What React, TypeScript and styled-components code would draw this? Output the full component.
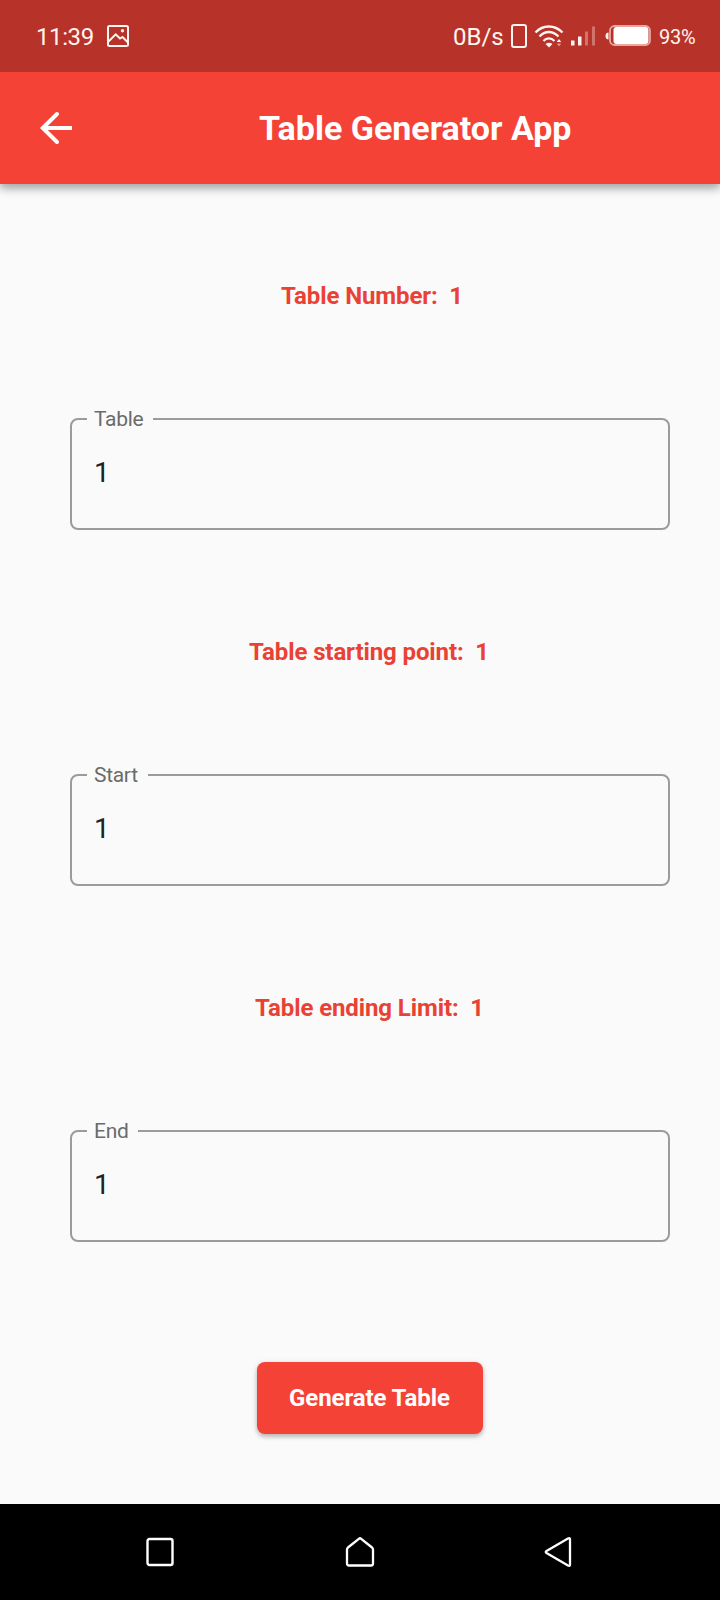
import React from 'react';
import styled, { createGlobalStyle } from 'styled-components';

const GlobalStyle = createGlobalStyle`
  * { box-sizing: border-box; }
  body { margin: 0; background: #fafafa; font-family: Roboto, "Liberation Sans", sans-serif; }
`;

const Screen = styled.div`
  width: 720px;
  height: 1600px;
  display: flex;
  flex-direction: column;
  background: #fafafa;
  overflow: hidden;
`;

const StatusBar = styled.header`
  position: relative;
  z-index: 1;
  height: 72px;
  flex: none;
  display: flex;
  align-items: center;
  padding: 0 24px 0 36px;
  background: #b73229;
  color: #fff4ef;
`;

const StatusText = styled.span<{ $size: number; $width: number; $gap?: number; $tracking?: number }>`
  width: ${(p) => p.$width}px;
  margin-left: ${(p) => p.$gap ?? 0}px;
  font-size: ${(p) => p.$size}px;
  letter-spacing: ${(p) => p.$tracking ?? 0}px;
  line-height: 28px;
  white-space: nowrap;
  padding-top: 1px;
`;

const StatusGroup = styled.div`
  display: flex;
  align-items: center;
`;

const RightGroup = styled(StatusGroup)`
  margin-left: auto;
`;

const Glyph = styled.svg<{ $gap?: number }>`
  display: block;
  flex: none;
  margin-left: ${(p) => p.$gap ?? 0}px;
`;

const AppBar = styled.div`
  height: 112px;
  flex: none;
  display: flex;
  align-items: center;
  padding-left: 32px;
  background: #f44336;
  color: #fff;
  box-shadow: 0 4px 10px rgba(0, 0, 0, 0.24), 0 4px 8px rgba(0, 0, 0, 0.16);
`;

const BackButton = styled.button`
  width: 48px;
  height: 48px;
  padding: 0;
  border: 0;
  background: none;
  color: inherit;
`;

const Title = styled.h1`
  margin: 0 0 0 179px;
  font-size: 34px;
  line-height: 40px;
  font-weight: 700;
  white-space: nowrap;
`;

const Form = styled.main`
  flex: 1;
  display: flex;
  flex-direction: column;
  padding: 98px 50px 0 70px;
`;

const Section = styled.section`
  height: 356px;
  flex: none;
  display: flex;
  flex-direction: column;
`;

const Heading = styled.h2<{ $inset: number }>`
  margin: 0 0 97px;
  padding-left: ${(p) => p.$inset}px;
  color: #e94235;
  font-size: 24px;
  letter-spacing: -0.1px;
  line-height: 28px;
  font-weight: 700;
  white-space: pre;
`;

const Field = styled.fieldset`
  height: 123px;
  margin: 0;
  padding: 0;
  border: 2px solid #9b9b9b;
  border-radius: 8px;
`;

const Label = styled.legend<{ $width: number }>`
  width: ${(p) => p.$width}px;
  margin-left: 15px;
  padding: 0 0 0 7px;
  color: #6b6b6b;
  font-size: 21px;
  letter-spacing: -0.3px;
  line-height: 24px;
`;

const Value = styled.div`
  padding: 25px 22px 0;
  color: #212121;
  font-size: 28px;
  line-height: 34px;
`;

const GenerateButton = styled.button`
  align-self: center;
  width: 226px;
  height: 72px;
  flex: none;
  margin-top: 12px;
  padding: 0 1px 0 0;
  border: 0;
  border-radius: 8px;
  background: #f44336;
  color: #fff;
  font-family: inherit;
  font-size: 24px;
  letter-spacing: -0.1px;
  font-weight: 700;
  box-shadow: 0 3px 4px rgba(0, 0, 0, 0.2), 0 1px 6px rgba(0, 0, 0, 0.12);
`;

const NavBar = styled.nav`
  height: 96px;
  flex: none;
  display: flex;
  align-items: center;
  justify-content: space-between;
  padding: 0 144px;
  background: #000;
`;

const sections = [
  { title: 'Table Number:  1', label: 'Table', value: '1', inset: 211, notch: 66 },
  { title: 'Table starting point:  1', label: 'Start', value: '1', inset: 179, notch: 61 },
  { title: 'Table ending Limit:  1', label: 'End', value: '1', inset: 185, notch: 51 },
];

const PictureIcon = () => (
  <Glyph $gap={12} width="24" height="24" viewBox="0 0 24 24" fill="none" stroke="#fff4ef" strokeWidth="2">
    <rect x="2" y="2" width="20" height="20" rx="1.5" />
    <path d="M2.5 17.5 9.7 10.3l4.3 4.2 2.5-1.5 5 5" />
    <circle cx="16.5" cy="6.8" r="1.7" fill="#fff4ef" stroke="none" />
  </Glyph>
);

const PhoneIcon = () => (
  <Glyph $gap={7} width="18" height="24" viewBox="0 0 18 24" fill="none" stroke="#fff4ef" strokeWidth="2">
    <rect x="2" y="1" width="14" height="22" rx="2" />
  </Glyph>
);

const WifiIcon = () => (
  <Glyph $gap={6} width="30" height="24" viewBox="0 0 30 24" fill="none" stroke="#fff4ef" strokeWidth="2.3">
    <path d="M1.5 8.5C9 .5 20.5 .5 28.5 8.5" />
    <path d="M5.5 12.5C11 6.5 18.5 6.5 24.5 12.5" />
    <path d="M9.5 17C12.5 13.5 17 13.5 20.5 17" />
    <path d="m11.5 20 3.5 3.5 3.5-3.5c-2-1.7-5-1.7-7 0Z" fill="#fff4ef" stroke="none" />
    <path d="m22.7 18 2.3-3 2.3 3Z" fill="#fff4ef" stroke="none" />
    <path d="m22.7 19.5 2.3 3 2.3-3Z" fill="#fff4ef" fillOpacity="0.5" stroke="none" />
  </Glyph>
);

const SignalIcon = () => (
  <Glyph $gap={7} width="25" height="20" viewBox="0 0 25 20" fill="#fff4ef">
    <rect x="0" y="14.5" width="3.5" height="5" />
    <rect x="7" y="10.5" width="3.5" height="9" />
    <rect x="14" y="5.5" width="3" height="14" opacity="0.35" />
    <rect x="21" y="0.5" width="3" height="19" opacity="0.35" />
  </Glyph>
);

const BatteryIcon = () => (
  <Glyph $gap={9} width="47" height="22" viewBox="0 0 47 22">
    <path d="M3.5 7.5v7C1.5 14.5.5 13 .5 11s1-3.500 3-3.500Z" fill="#fff4ef" />
    <rect x="5" y="1" width="40" height="19" rx="4.5" fill="none" stroke="#e9a59f" strokeWidth="1.8" />
    <rect x="8.500" y="2" width="35" height="17" rx="3" fill="#fff" />
  </Glyph>
);

export default function App() {
  return (
    <Screen>
      <GlobalStyle />
      <StatusBar>
        <StatusGroup>
          <StatusText $size={24} $width={58} $tracking={-0.4}>11:39</StatusText>
          <PictureIcon />
        </StatusGroup>
        <RightGroup>
          <StatusText $size={24} $width={50}>0B/s</StatusText>
          <PhoneIcon />
          <WifiIcon />
          <SignalIcon />
          <BatteryIcon />
          <StatusText $size={20} $width={37} $gap={7} $tracking={-0.3}>93%</StatusText>
        </RightGroup>
      </StatusBar>
      <AppBar>
        <BackButton aria-label="Back">
          <Glyph width="48" height="48" viewBox="0 0 24 24" fill="none" stroke="#fff" strokeWidth="2">
            <path d="M12.500 5 5.400 12l7.100 7" strokeLinecap="round" />
            <path d="M6 12H20" />
          </Glyph>
        </BackButton>
        <Title>Table Generator App</Title>
      </AppBar>
      <Form>
        {sections.map((s) => (
          <Section key={s.label}>
            <Heading $inset={s.inset}>{s.title}</Heading>
            <Field>
              <Label $width={s.notch}>{s.label}</Label>
              <Value>{s.value}</Value>
            </Field>
          </Section>
        ))}
        <GenerateButton>Generate Table</GenerateButton>
      </Form>
      <NavBar>
        <Glyph width="32" height="32" viewBox="0 0 32 32" fill="none" stroke="#fff" strokeWidth="2.4">
          <rect x="3.5" y="3" width="25" height="26" rx="2" />
        </Glyph>
        <Glyph width="32" height="32" viewBox="0 0 32 32" fill="none" stroke="#fff" strokeWidth="2.3" strokeLinejoin="round">
          <path d="M14.8 2.8Q16 1.8 17.2 2.8L28 11.5Q29 12.5 29 13.5V27.5Q29 29.5 27 29.5H5Q3 29.5 3 27.5V13.5Q3 12.5 4 11.5Z" />
        </Glyph>
        <Glyph width="32" height="32" viewBox="0 0 32 32" fill="none" stroke="#fff" strokeWidth="2.3" strokeLinejoin="round">
          <path d="M2.5 15 24 2.5Q26 1.5 26 3.5V28.5Q26 30.5 24 29.5L2.5 17Q1 16 2.5 15Z" />
        </Glyph>
      </NavBar>
    </Screen>
  );
}
